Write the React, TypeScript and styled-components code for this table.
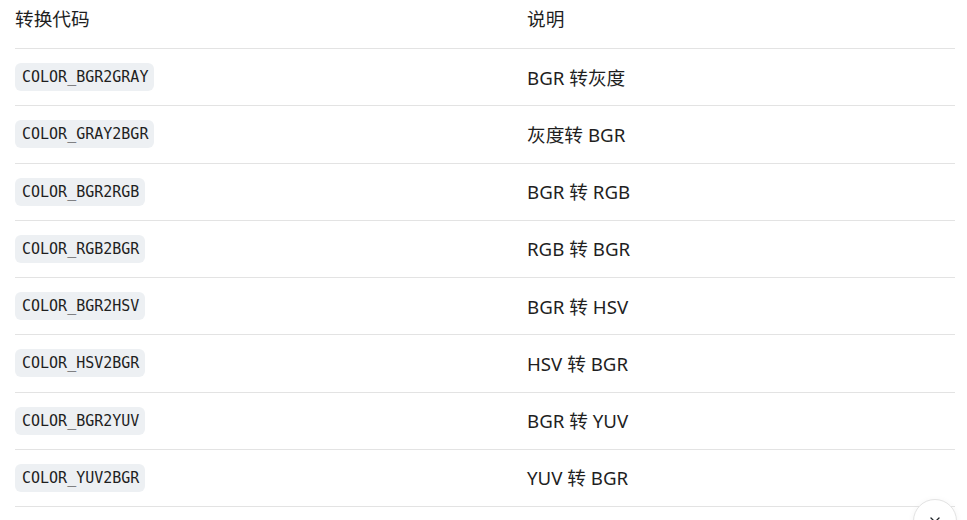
import React from "react";
import styled, { createGlobalStyle } from "styled-components";

const GlobalStyle = createGlobalStyle`
  html, body {
    margin: 0;
    padding: 0;
    background: #ffffff;
    overflow: hidden;
  }
  body {
    font-family: "Noto Sans", "Noto Sans CJK SC", sans-serif;
    color: #1f2328;
  }
`;

const rows: [string, string][] = [
  ["COLOR_BGR2GRAY", "BGR 转灰度"],
  ["COLOR_GRAY2BGR", "灰度转 BGR"],
  ["COLOR_BGR2RGB", "BGR 转 RGB"],
  ["COLOR_RGB2BGR", "RGB 转 BGR"],
  ["COLOR_BGR2HSV", "BGR 转 HSV"],
  ["COLOR_HSV2BGR", "HSV 转 BGR"],
  ["COLOR_BGR2YUV", "BGR 转 YUV"],
  ["COLOR_YUV2BGR", "YUV 转 BGR"],
];

const Page = () => {
  return (
    <Wrapper>
      <GlobalStyle />
      <Table>
        <HeadRow>
          <HeadCell>转换代码</HeadCell>
          <HeadCell>说明</HeadCell>
        </HeadRow>
        {rows.map(([code, desc]) => (
          <Row key={code}>
            <Cell>
              <Code>{code}</Code>
            </Cell>
            <Cell>{desc}</Cell>
          </Row>
        ))}
      </Table>
      <ScrollButton aria-label="scroll down">
        <svg width="16" height="16" viewBox="0 0 24 24" fill="none" stroke="#1f2328" strokeWidth="2" strokeLinecap="round" strokeLinejoin="round">
          <path d="M6 9l6 6 6-6" />
        </svg>
      </ScrollButton>
    </Wrapper>
  );
};

const Wrapper = styled.div`
  position: relative;
  width: 967px;
  height: 520px;
  padding: 0 12px 0 15px;
  box-sizing: border-box;
  overflow: hidden;
`;

const Table = styled.div`
  display: flex;
  flex-direction: column;
  width: 940px;
`;

const HeadRow = styled.div`
  display: grid;
  grid-template-columns: 512px 1fr;
  height: 49px;
  box-sizing: border-box;
  border-bottom: 1px solid #e3e3e3;
`;

const HeadCell = styled.div`
  font-size: 18.7px;
  line-height: 27px;
  padding-top: 5px;
  color: #1f1f1f;
`;

const Row = styled.div`
  display: grid;
  grid-template-columns: 512px 1fr;
  align-items: center;
  height: 57.25px;
  box-sizing: border-box;
  border-bottom: 1px solid #e3e3e3;
`;

const Cell = styled.div`
  font-size: 18.7px;
  line-height: 27px;
  color: #1f1f1f;
`;

const Code = styled.code`
  display: inline-block;
  font-family: "DejaVu Sans Mono", "Liberation Mono", monospace;
  font-size: 15px;
  line-height: 28px;
  height: 28px;
  padding: 0 6px 0 7px;
  border-radius: 6px;
  background: #edf0f3;
  color: #1f1f1f;
  vertical-align: top;
`;

const ScrollButton = styled.button`
  position: absolute;
  left: 913px;
  top: 499px;
  width: 44px;
  height: 44px;
  border-radius: 50%;
  border: 1px solid #e3e3e3;
  background: #ffffff;
  box-shadow: 0 1px 6px rgba(0, 0, 0, 0.05);
  display: flex;
  align-items: flex-start;
  justify-content: center;
  padding-top: 12px;
  box-sizing: border-box;
  cursor: pointer;
`;

export default Page;
